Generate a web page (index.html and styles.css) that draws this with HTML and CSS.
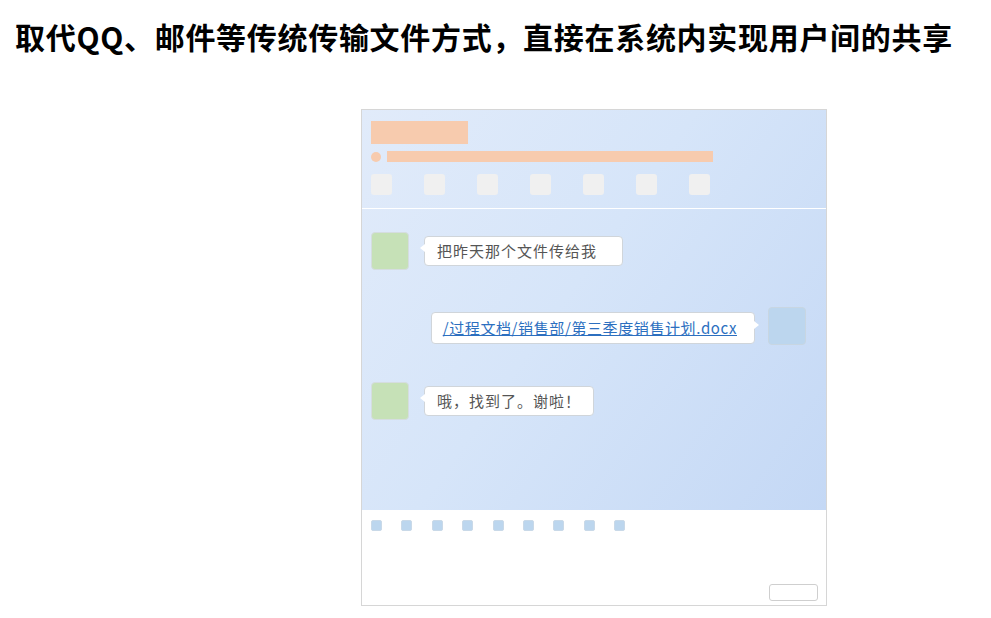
FILE: index.html
```html
<!DOCTYPE html>
<html lang="zh">
<head>
<meta charset="utf-8">
<link rel="stylesheet" href="styles.css">
</head>
<body>
<h1 class="title">取代QQ、邮件等传统传输文件方式，直接在系统内实现用户间的共享</h1>
<div class="window">
  <div class="pane">
    <div class="header">
      <div class="name-block"></div>
      <div class="status-row"><span class="dot"></span><span class="status-bar"></span></div>
      <div class="tools">
        <span class="tool"></span><span class="tool"></span><span class="tool"></span><span class="tool"></span><span class="tool"></span><span class="tool"></span><span class="tool"></span>
      </div>
    </div>
    <div class="chat">
      <div class="msg left">
        <div class="avatar green"></div>
        <div class="bubble wide">把昨天那个文件传给我</div>
      </div>
      <div class="msg right">
        <div class="bubble link-bubble"><a class="file-link" href="#">/过程文档/销售部/第三季度销售计划.docx</a></div>
        <div class="avatar blue"></div>
      </div>
      <div class="msg left">
        <div class="avatar green"></div>
        <div class="bubble">哦，找到了。谢啦！</div>
      </div>
    </div>
  </div>
  <div class="composer">
    <div class="emotes">
      <span class="emo"></span><span class="emo"></span><span class="emo"></span><span class="emo"></span><span class="emo"></span><span class="emo"></span><span class="emo"></span><span class="emo"></span><span class="emo"></span>
    </div>
    <div class="send-row"><span class="send"></span></div>
  </div>
</div>
</body>
</html>
```
FILE: styles.css
```css
* { box-sizing: border-box; }
body {
  margin: 0;
  background: #fff;
  font-family: "Noto Sans CJK SC", "Noto Sans", sans-serif;
}
.title {
  margin: 0;
  padding: 20px 0 0 15px;
  font-size: 30px;
  line-height: 32px;
  font-weight: 700;
  letter-spacing: 0.7px;
  color: #000;
  white-space: nowrap;
}
.window {
  margin: 57px 0 0 361px;
  width: 466px;
  height: 497px;
  border: 1px solid #d6d6d6;
  display: flex;
  flex-direction: column;
}
.pane {
  background: linear-gradient(125deg, #e1ebfa 0%, #d6e5f9 45%, #c4d8f5 100%);
  height: 400px;
  display: flex;
  flex-direction: column;
}
.header {
  height: 99px;
  padding: 11px 9px 0;
  border-bottom: 1px solid #fff;
}
.name-block {
  width: 97px;
  height: 23px;
  background: #f7cbae;
}
.status-row {
  display: flex;
  align-items: center;
  margin-top: 7px;
  height: 11px;
}
.dot {
  width: 10px;
  height: 10px;
  border-radius: 50%;
  background: #f7cbae;
}
.status-bar {
  margin-left: 6px;
  width: 326px;
  height: 11px;
  background: #f7cbae;
}
.tools {
  display: flex;
  gap: 32px;
  margin-top: 12px;
}
.tool {
  width: 21px;
  height: 21px;
  border-radius: 3px;
  background: #f0f0f0;
}
.chat {
  flex: 1;
  padding: 23px 20px 0 9px;
  display: flex;
  flex-direction: column;
  gap: 37px;
}
.msg {
  display: flex;
  align-items: flex-start;
  height: 38px;
}
.msg.right { justify-content: flex-end; }
.avatar {
  width: 38px;
  height: 38px;
  border-radius: 4px;
  border: 1px solid #d5dde0;
}
.avatar.green { background: #c6e1b7; }
.avatar.blue { background: #bcd6ee; border-color: #c8d6e2; }
.bubble {
  position: relative;
  margin-top: 4px;
  background: #fff;
  border: 1px solid #d0d5da;
  border-radius: 4px;
  padding: 0 12px 0 12px;
  height: 30px;
  line-height: 28px;
  font-size: 15px;
  letter-spacing: 1px;
  color: #555;
  white-space: nowrap;
}
.msg.left .bubble { margin-left: 15px; }
.bubble.wide { padding-right: 25px; }
.msg.left .bubble::before {
  content: "";
  position: absolute;
  left: -5px;
  top: 7px;
  border-style: solid;
  border-width: 4px 5px 4px 0;
  border-color: transparent #fff transparent transparent;
}
.link-bubble {
  height: 32px;
  line-height: 30px;
  padding: 0 17px 0 11px;
  margin-top: 5px;
  margin-right: 13px;
}
.msg.right .bubble::after {
  content: "";
  position: absolute;
  right: -5px;
  top: 8px;
  border-style: solid;
  border-width: 4px 0 4px 5px;
  border-color: transparent transparent transparent #fff;
}
.file-link {
  color: #2c6fbf;
  text-decoration: underline;
  letter-spacing: 0.6px;
}
.composer {
  flex: 1;
  background: #fff;
  padding: 10px 8px 4px 9px;
  display: flex;
  flex-direction: column;
}
.emotes {
  display: flex;
  gap: 19.4px;
}
.emo {
  width: 11px;
  height: 11px;
  border-radius: 2px;
  background: #bcd6ee;
  border: 1px solid #c9d9e8;
}
.send-row {
  margin-top: auto;
  display: flex;
  justify-content: flex-end;
}
.send {
  width: 49px;
  height: 17px;
  border: 1px solid #cfcfcf;
  border-radius: 3px;
  background: #fff;
}
```
